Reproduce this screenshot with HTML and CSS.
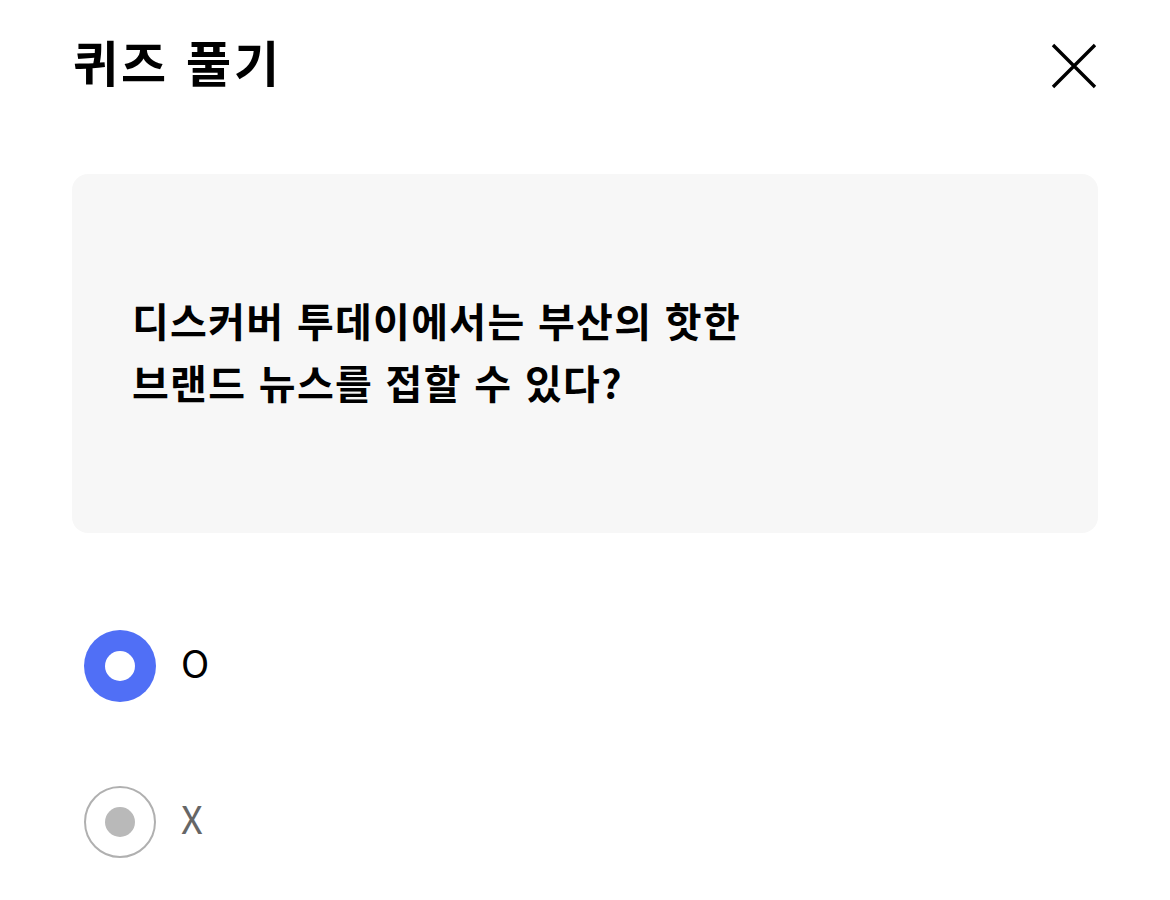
FILE: index.html
```html
<!doctype html>
<html lang="ko">
<head>
    <meta charset="UTF-8">
    <title>퀴즈 풀기</title>
    <link rel="stylesheet" href="styles.css">
</head>
<body>
<div class="quiz">
    <div class="quiz-head">
        <h1 class="quiz-title">퀴즈 풀기</h1>
        <button class="quiz-close" type="button" aria-label="닫기">
            <svg width="48" height="48" viewBox="0 0 48 48">
                <path d="M3 3 L45 45 M45 3 L3 45" stroke="#000" stroke-width="3.4" fill="none"/>
            </svg>
        </button>
    </div>
    <div class="quiz-card">
        <p class="quiz-question">디스커버 투데이에서는 부산의 핫한<br>브랜드 뉴스를 접할 수 있다?</p>
    </div>
    <ul class="quiz-options">
        <li class="option checked"><span class="radio"></span><span class="label">O</span></li>
        <li class="option"><span class="radio"></span><span class="label">X</span></li>
    </ul>
</div>
</body>
</html>
```

FILE: styles.css
```css
* {
    margin: 0;
    padding: 0;
    box-sizing: border-box;
}

body {
    background: #fff;
    font-family: "Noto Sans CJK KR", "Noto Sans", sans-serif;
    color: #000;
}

.quiz {
    padding: 0 72px;
}

.quiz-head {
    display: flex;
    justify-content: space-between;
    align-items: center;
    height: 84px;
    margin-top: 24px;
}

.quiz-title {
    font-size: 49px;
    font-weight: 700;
    letter-spacing: 3px;
    line-height: 1;
    margin-top: -12px;
    padding-left: 1px;
}

.quiz-close {
    border: 0;
    background: none;
    width: 48px;
    height: 48px;
}

.quiz-close svg {
    display: block;
}

.quiz-card {
    margin-top: 66px;
    height: 359px;
    background: #f7f7f7;
    border-radius: 16px;
    display: flex;
    align-items: center;
    padding-left: 60px;
}

.quiz-question {
    font-size: 40px;
    font-weight: 700;
    line-height: 62px;
    letter-spacing: 1.3px;
    margin-top: -6px;
}

.quiz-options {
    list-style: none;
    margin-top: 97px;
    padding-left: 12px;
    display: flex;
    flex-direction: column;
    gap: 84px;
}

.option {
    display: flex;
    align-items: center;
    gap: 25px;
    height: 72px;
}

.radio {
    width: 72px;
    height: 72px;
    border-radius: 50%;
    border: 2px solid #b0b0b0;
    display: flex;
    align-items: center;
    justify-content: center;
}

.radio::after {
    content: "";
    width: 30px;
    height: 30px;
    border-radius: 50%;
    background: #b9b9b9;
}

.option.checked .radio {
    border: 0;
    background: #506ff6;
}

.option.checked .radio::after {
    background: #fff;
}

.label {
    font-size: 38px;
    color: #666;
    line-height: 1;
    margin-top: -8px;
}

.option.checked .label {
    color: #000;
}
```
